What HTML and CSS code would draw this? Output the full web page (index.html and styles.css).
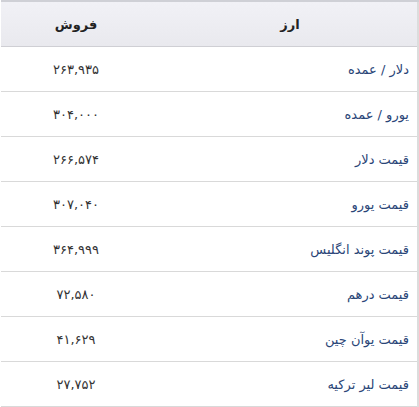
FILE: index.html
```html
<!DOCTYPE html>
<html lang="fa" dir="rtl">
<head>
<meta charset="utf-8">
<link rel="stylesheet" href="styles.css">
</head>
<body>
<table class="rates">
  <thead>
    <tr><th class="name-col">ارز</th><th class="val-col">فروش</th></tr>
  </thead>
  <tbody>
    <tr><td class="name">دلار / عمده</td><td class="val">۲۶۳,۹۳۵</td></tr>
    <tr><td class="name">یورو / عمده</td><td class="val">۳۰۴,۰۰۰</td></tr>
    <tr><td class="name">قیمت دلار</td><td class="val">۲۶۶,۵۷۴</td></tr>
    <tr><td class="name">قیمت یورو</td><td class="val">۳۰۷,۰۴۰</td></tr>
    <tr><td class="name">قیمت پوند انگلیس</td><td class="val">۳۶۴,۹۹۹</td></tr>
    <tr><td class="name">قیمت درهم</td><td class="val">۷۲,۵۸۰</td></tr>
    <tr><td class="name">قیمت یوآن چین</td><td class="val">۴۱,۶۲۹</td></tr>
    <tr><td class="name">قیمت لیر ترکیه</td><td class="val">۲۷,۷۵۲</td></tr>
  </tbody>
</table>
</body>
</html>
```
FILE: styles.css
```css
html, body {
  margin: 0;
  padding: 0;
  background: #ffffff;
}
body {
  font-family: Tahoma, "DejaVu Sans", sans-serif;
  width: 419px;
  height: 407px;
  overflow: hidden;
}
.rates {
  width: 418px;
  border-collapse: collapse;
  border-top: 2px solid #cfd0d6;
  border-right: 2px solid #dcdcdc;
}
.rates th {
  height: 44px;
  padding: 0;
  background: linear-gradient(#f1f1f6, #e9e9ee);
  border-bottom: 1px solid #cfcfd4;
  font-size: 13px;
  font-weight: bold;
  color: #222;
  text-align: center;
}
.rates th.name-col { padding-left: 12px; }
.rates .val-col { width: 150px; }
.rates td {
  height: 44px;
  padding: 0;
  border-bottom: 1px solid #d9d9d9;
  font-size: 13px;
}
.rates td.name {
  text-align: right;
  padding-right: 8px;
  color: #2a4577;
}
.rates td.val {
  text-align: center;
  color: #333;
  font-size: 13px;
}
```
